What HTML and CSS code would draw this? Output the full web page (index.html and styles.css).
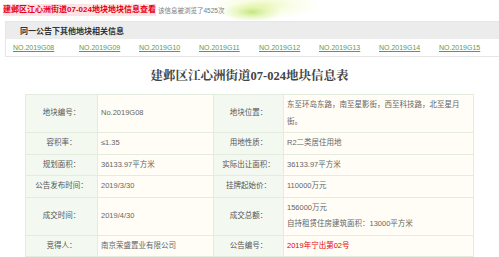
FILE: index.html
```html
<!DOCTYPE html>
<html lang="zh-CN">
<head>
<meta charset="utf-8">
<title>建邺区江心洲街道07-024地块地块信息查看</title>
<link rel="stylesheet" href="styles.css">
</head>
<body>
<div class="page">
  <header class="head">
    <h1 class="head-title">建邺区江心洲街道07-024地块地块信息查看</h1>
    <span class="views">该信息被浏览了4525次</span>
  </header>
  <section class="related">
    <div class="related-bar">同一公告下其他地块相关信息</div>
    <div class="related-links">
      <a class="link" href="#">NO.2019G08</a>
      <a class="link" href="#">NO.2019G09</a>
      <a class="link" href="#">NO.2019G10</a>
      <a class="link" href="#">NO.2019G11</a>
      <a class="link" href="#">NO.2019G12</a>
      <a class="link" href="#">NO.2019G13</a>
      <a class="link" href="#">NO.2019G14</a>
      <a class="link" href="#">NO.2019G15</a>
    </div>
  </section>
  <h2 class="table-title">建邺区江心洲街道07-024地块信息表</h2>
  <table class="info">
    <colgroup>
      <col class="c-label1"><col class="c-val1"><col class="c-label2"><col class="c-val2">
    </colgroup>
    <tr>
      <td class="label">地块编号：</td><td class="val">No.2019G08</td>
      <td class="label">地块位置：</td><td class="val">东至环岛东路，南至星影街，西至科技路，北至星月街。</td>
    </tr>
    <tr>
      <td class="label">容积率：</td><td class="val">≤1.35</td>
      <td class="label">用地性质：</td><td class="val">R2二类居住用地</td>
    </tr>
    <tr>
      <td class="label">规划面积：</td><td class="val">36133.97平方米</td>
      <td class="label">实际出让面积：</td><td class="val">36133.97平方米</td>
    </tr>
    <tr>
      <td class="label">公告发布时间：</td><td class="val">2019/3/30</td>
      <td class="label">挂牌起始价：</td><td class="val">110000万元</td>
    </tr>
    <tr>
      <td class="label">成交时间：</td><td class="val">2019/4/30</td>
      <td class="label">成交总额：</td><td class="val">156000万元<br>自持租赁住房建筑面积：13000平方米</td>
    </tr>
    <tr>
      <td class="label">竞得人：</td><td class="val">南京荣盛置业有限公司</td>
      <td class="label">公告编号：</td><td class="val red">2019年宁出第02号</td>
    </tr>
  </table>
</div>
</body>
</html>
```

FILE: styles.css
```css
html, body {
  margin: 0;
  padding: 0;
  background: #fff;
}
body {
  font-family: "Liberation Sans", "Noto Sans CJK SC", sans-serif;
  width: 499px;
  overflow: hidden;
}
.page {
  width: 499px;
}
.head {
  height: 20px;
  display: flex;
  align-items: center;
  gap: 2px;
  padding-left: 3px;
  background:
    radial-gradient(ellipse 30px 10px at 252px 12px, rgba(190, 228, 120, 0.9) 0%, rgba(220, 242, 160, 0.6) 50%, rgba(255, 255, 255, 0) 100%),
    radial-gradient(ellipse 55px 14px at 265px 5px, rgba(235, 248, 185, 0.9) 0%, rgba(245, 252, 215, 0.6) 50%, rgba(255, 255, 255, 0) 100%);
}
.head-title {
  margin: 0;
  font-size: 8px;
  font-weight: bold;
  color: #e60012;
  line-height: 12px;
  background: #fde3e3;
}
.views {
  font-size: 6.5px;
  color: #7a7a7a;
  line-height: 10px;
  margin-top: 1px;
}
.related {
  margin: 1px 0 0 5px;
  border: 1px solid #e6e6e6;
  border-right: 0;
}
.related-bar {
  height: 17px;
  background: #ececec;
  padding-left: 14px;
  display: flex;
  align-items: center;
  font-size: 8px;
  font-weight: bold;
  color: #333;
}
.related-links {
  height: 17px;
  display: flex;
  align-items: center;
  padding-left: 7px;
}
.link {
  width: 60px;
  flex: none;
  font-size: 7px;
  color: #5c9d4c;
  text-decoration: underline;
}
.link:first-child {
  width: 66px;
}
.table-title {
  margin: 12px 0 11px;
  text-align: center;
  font-family: "Liberation Serif", "Noto Serif CJK SC", "Noto Sans CJK SC", serif;
  font-size: 12.5px;
  line-height: 14px;
  font-weight: bold;
  color: #444;
}
.info {
  margin-left: 25px;
  width: 448px;
  border-collapse: collapse;
  table-layout: fixed;
}
.c-label1 { width: 72px; }
.c-val1 { width: 116px; }
.c-label2 { width: 70px; }
.c-val2 { width: 190px; }
.info td {
  border: 1px solid #e4ecdd;
  font-size: 7.5px;
  line-height: 16.5px;
  padding: 2px 3px;
  color: #666;
  vertical-align: middle;
}
.info td.label {
  background: #f3f9f1;
  text-align: center;
  color: #555;
}
.info td.val {
  background: #fffdf5;
}
.info td.red {
  color: #e60000;
}
```
